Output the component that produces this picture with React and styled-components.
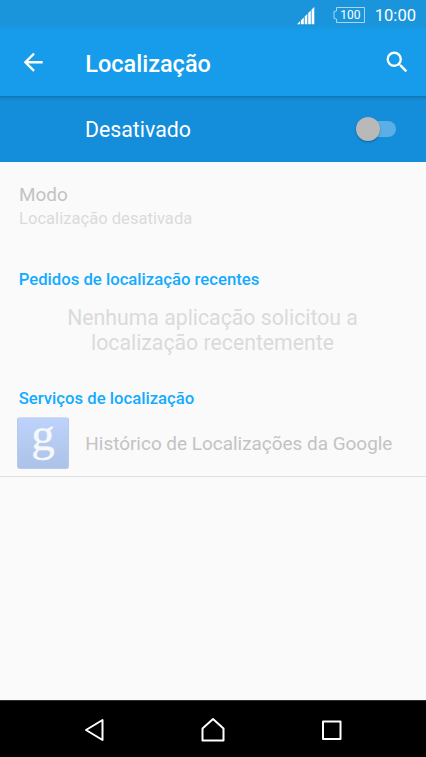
import React, { useState } from 'react';
import styled, { createGlobalStyle } from 'styled-components';

const GlobalStyle = createGlobalStyle`
  * {
    box-sizing: border-box;
  }

  body {
    margin: 0;
    background-color: #fafafa;
    font-family: Roboto, 'Noto Sans', sans-serif;
  }
`;

const Screen = styled.div`
  display: flex;
  flex-direction: column;
  width: 426px;
  height: 757px;
  overflow: hidden;
  background-color: #fafafa;
`;

const StatusBar = styled.div`
  display: flex;
  align-items: center;
  justify-content: flex-end;
  height: 30px;
  padding: 1px 10px 0 0;
  background: linear-gradient(#1a95db 26px, #169cea 30px);
  color: #fff;
`;

const Battery = styled.svg`
  margin: 0 9px 1px 17px;
`;

const Clock = styled.span`
  font-size: 16.57px;
  line-height: 20px;
`;

const AppBar = styled.header`
  display: flex;
  align-items: center;
  height: 66px;
  padding: 0 15px 1px 19px;
  background-color: #169cea;
  color: #fff;
`;

const IconButton = styled.button`
  display: flex;
  padding: 0;
  border: none;
  background: none;
  color: inherit;
`;

const Title = styled.h1`
  flex: 1;
  margin: 3px 0 0 37.8px;
  font-size: 23.5px;
  font-weight: 500;
  line-height: 28px;
`;

const SwitchBar = styled.div`
  display: flex;
  align-items: center;
  justify-content: space-between;
  height: 66px;
  padding: 0 30px 0 85px;
  background: linear-gradient(#1175b1, #1483c7 2px, #148ddb 5px);
  color: #fff;
  font-size: 21.3px;
`;

const Toggle = styled.button`
  display: flex;
  flex-direction: ${props => (props.$on ? 'row-reverse' : 'row')};
  align-items: center;
  width: 40px;
  height: 24px;
  padding: 0;
  border: none;
  background: none;
`;

const Track = styled.span`
  flex: none;
  width: 32px;
  height: 16px;
  margin: 0 -16px;
  border-radius: 8px;
  background-color: #5bafe6;
`;

const Thumb = styled.span`
  position: relative;
  z-index: 1;
  flex: none;
  width: 24px;
  height: 24px;
  border-radius: 50%;
  background-color: #b9b9b9;
  box-shadow: 0 1px 2px rgba(0, 0, 0, 0.3);
`;

const Content = styled.main`
  flex: 1;
`;

const Preference = styled.div`
  padding: 22px 19px 0;
`;

const PreferenceTitle = styled.div`
  color: #c3c3c3;
  font-size: 18.93px;
  line-height: 22px;
`;

const Summary = styled.div`
  margin-top: 3px;
  color: #dadada;
  font-size: 16.6px;
  line-height: 20px;
`;

const SectionTitle = styled.h2`
  margin: ${props => props.$top}px 0 0 18.7px;
  color: #12abff;
  font-size: 16.7px;
  font-weight: 500;
  line-height: 20px;
`;

const EmptyMessage = styled.p`
  margin: 15px 61px 0 60px;
  color: #dadada;
  font-size: 21.25px;
  line-height: 25px;
  text-align: center;
`;

const ServiceRow = styled.div`
  display: flex;
  align-items: center;
  gap: 16.3px;
  height: 68px;
  padding: 0 17px;
  border-bottom: 1px solid #dfdfdf;
`;

const ServiceName = styled(PreferenceTitle)`
  padding-top: 2px;
`;

const GoogleLogo = styled.div`
  display: flex;
  justify-content: center;
  width: 52px;
  height: 52px;
  border: 1px solid #b9cae9;
  border-top-color: #cfddf5;
  border-radius: 3px;
  background: linear-gradient(#bdd3fb, #adc2e8);
  color: #f7f8fa;
  font-family: 'Liberation Serif', serif;
  font-size: 47px;
  line-height: 33px;
  -webkit-text-stroke: 0.4px #f7f8fa;
`;

const NavBar = styled.nav`
  display: flex;
  align-items: center;
  justify-content: center;
  gap: 89px;
  height: 57px;
  padding-top: 1px;
  border-top: 1px solid #2e2e2e;
  background-color: #000;
  color: #fff;
`;

const NavIcon = styled.svg`
  display: block;
  width: 30px;
  height: 30px;
  fill: none;
  stroke: currentColor;
  stroke-width: 2;
  stroke-linejoin: round;
`;

const App = () => {
  const [enabled, setEnabled] = useState(false);

  return (
    <Screen>
      <GlobalStyle />

      <StatusBar>
        <svg width="18" height="18" viewBox="0 0 18 18" fill="#fff">
          <path d="M0 17.3 3.2 14v3.3zM4 13.3 6.8 10.4v6.9H4zM7.7 9.5l2.6-2.6v10.4H7.7zM11.2 6l2.6-2.6v13.9h-2.6zM14.6 2.6 17.3 0v17.3h-2.7z" />
        </svg>
        <Battery width="34" height="18" viewBox="0 0 34 18">
          <path
            d="M4.5 1.5h28v15h-28v-3.5l-2.5-.5v-7l2.5-.5z"
            fill="none"
            stroke="#a9d6f3"
          />
          <text x="18.3" y="13.3" fill="#fff" fontSize="12" textAnchor="middle">100</text>
        </Battery>
        <Clock>10:00</Clock>
      </StatusBar>

      <AppBar>
        <IconButton aria-label="Voltar">
          <svg width="28.4" height="28.4" viewBox="0 0 24 24" fill="currentColor">
            <path d="M20 11H7.83l5.59-5.59L12 4l-8 8 8 8 1.41-1.41L7.83 13H20v-2z" />
          </svg>
        </IconButton>
        <Title>Localização</Title>
        <IconButton aria-label="Pesquisar">
          <svg width="28.4" height="28.4" viewBox="0 0 24 24" fill="currentColor">
            <path d="M15.5 14h-.79l-.28-.27A6.471 6.471 0 0 0 16 9.5 6.5 6.5 0 1 0 9.5 16c1.61 0 3.09-.59 4.23-1.57l.27.28v.79l5 4.99L20.49 19l-4.99-5zm-6 0C7.01 14 5 11.99 5 9.5S7.01 5 9.5 5 14 7.01 14 9.5 11.99 14 9.5 14z" />
          </svg>
        </IconButton>
      </AppBar>

      <SwitchBar>
        <span>Desativado</span>
        <Toggle
          role="switch"
          aria-checked={enabled}
          $on={enabled}
          onClick={() => setEnabled(!enabled)}
        >
          <Thumb />
          <Track />
        </Toggle>
      </SwitchBar>

      <Content>
        <Preference>
          <PreferenceTitle>Modo</PreferenceTitle>
          <Summary>Localização desativada</Summary>
        </Preference>

        <SectionTitle $top={41}>Pedidos de localização recentes</SectionTitle>
        <EmptyMessage>Nenhuma aplicação solicitou a localização recentemente</EmptyMessage>

        <SectionTitle $top={34}>Serviços de localização</SectionTitle>
        <ServiceRow>
          <GoogleLogo>g</GoogleLogo>
          <ServiceName>Histórico de Localizações da Google</ServiceName>
        </ServiceRow>
      </Content>

      <NavBar>
        <NavIcon viewBox="0 0 30 30">
          <path d="M7 15 23.5 5v20z" />
        </NavIcon>
        <NavIcon viewBox="0 0 30 30">
          <path d="M4.5 25.5V13.5L15 4l10.5 9.5v12z" />
        </NavIcon>
        <NavIcon viewBox="0 0 30 30">
          <path d="M6 6.5h17.5V24H6z" />
        </NavIcon>
      </NavBar>
    </Screen>
  );
};

export default App;
